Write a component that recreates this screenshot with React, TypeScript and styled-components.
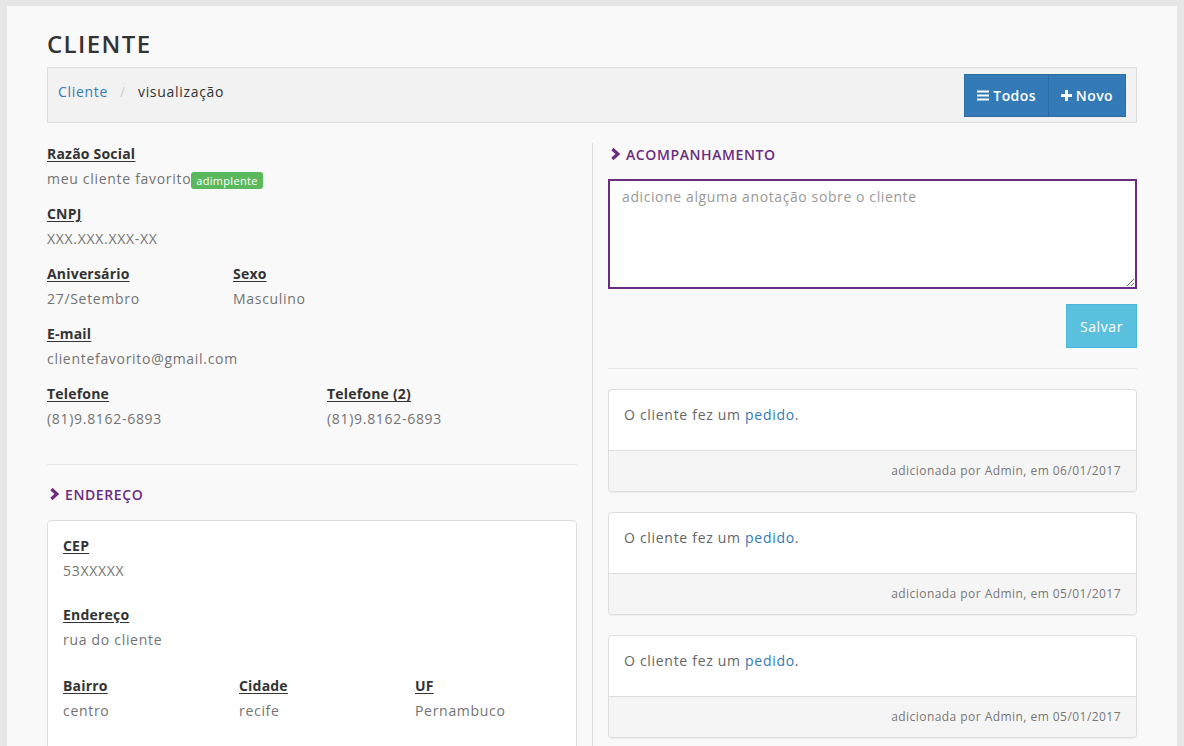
import React from "react";
import styled, { createGlobalStyle } from "styled-components";

const FONT = `"Open Sans", "Liberation Sans", sans-serif`;
const PURPLE = "#6b2c80";

const GlobalStyle = createGlobalStyle`
  html, body {
    margin: 0;
    padding: 0;
    background: #e6e6e6;
  }
  body {
    font-family: ${FONT};
    font-size: 14px;
    color: #333;
    overflow: hidden;
  }
  * {
    box-sizing: border-box;
  }
`;

const Page = styled.div`
  padding: 6px 7px 0 7px;
  height: 746px;
`;

const Panel = styled.div`
  background: #f9f9f9;
  width: 1170px;
  height: 740px;
  padding: 20px 40px 0 40px;
  overflow: hidden;
`;

const Title = styled.h1`
  margin: 0 0 5px 0;
  font-size: 24px;
  line-height: 36px;
  font-weight: 600;
  color: #333;
  letter-spacing: 1.4px;
`;

const Breadcrumb = styled.div`
  display: flex;
  align-items: flex-start;
  justify-content: space-between;
  height: 56px;
  background: #f2f2f2;
  border: 1px solid #ddd;
  padding: 0 10px;
`;

const Crumbs = styled.div`
  display: flex;
  align-items: center;
  gap: 12px;
  padding-top: 14px;
  line-height: 20px;
  font-size: 14px;
  font-weight: 500;
  letter-spacing: 0.7px;
`;

const CrumbLink = styled.a`
  color: #337ab7;
  text-decoration: none;
`;

const CrumbSep = styled.span`
  color: #ccc;
`;

const CrumbCurrent = styled.span`
  color: #333;
  font-weight: 500;
`;

const BtnGroup = styled.div`
  display: flex;
  margin-top: 6px;
`;

const TopButton = styled.button<{ $px: number }>`
  display: flex;
  align-items: center;
  gap: 4px;
  height: 43px;
  padding: 0 ${(p) => p.$px}px;
  background: #337ab7;
  border: 1px solid #2e6da4;
  color: #fff;
  font-family: ${FONT};
  font-size: 14px;
  font-weight: 600;
  letter-spacing: 0.4px;
  & + & {
    margin-left: -1px;
  }
`;

const Columns = styled.div`
  display: flex;
  margin-top: 21px;
`;

const LeftCol = styled.div`
  width: 530px;
  flex: none;
`;

const Divider = styled.div`
  width: 1px;
  background: #ddd;
  margin: -1px 15px 0 15px;
  flex: none;
  height: 620px;
`;

const RightCol = styled.div`
  width: 529px;
  flex: none;
`;

const FieldRow = styled.div<{ $cols: number; $col: number }>`
  display: grid;
  grid-template-columns: repeat(${(p) => p.$cols}, ${(p) => p.$col}px);
`;

const Field = styled.div<{ $mb?: number }>`
  margin-bottom: ${(p) => p.$mb ?? 15}px;
  white-space: nowrap;
`;

const Label = styled.div`
  font-weight: 700;
  text-decoration: underline;
  text-underline-offset: 2px;
  line-height: 20px;
  color: #333;
  letter-spacing: 0.2px;
`;

const Value = styled.div`
  margin-top: 5px;
  line-height: 20px;
  color: #737373;
  font-weight: 500;
  letter-spacing: 0.7px;
  display: flex;
  align-items: center;
`;

const Badge = styled.span`
  display: inline-block;
  background: #5cb85c;
  color: #fff;
  font-size: 11px;
  line-height: 17px;
  padding: 0 5px;
  border-radius: 3px;
  margin-top: 2px;
  letter-spacing: 0.3px;
`;

const Rule = styled.hr<{ $mt: number; $mb: number }>`
  border: 0;
  border-top: 1px solid #e6e6e6;
  margin: ${(p) => p.$mt}px 0 ${(p) => p.$mb}px 0;
`;

const SectionTitle = styled.div`
  display: flex;
  align-items: center;
  gap: 6px;
  height: 20px;
  color: ${PURPLE};
  font-weight: 600;
  font-size: 14px;
  letter-spacing: 0.6px;
  padding-left: 3px;
`;

const Box = styled.div`
  margin-top: 16px;
  background: #fff;
  border: 1px solid #ddd;
  border-radius: 4px;
  padding: 15px;
  height: 260px;
`;

const Note = styled.textarea`
  display: block;
  width: 100%;
  height: 110px;
  margin-top: 15px;
  border: 2px solid ${PURPLE};
  padding: 6px 12px;
  font-family: ${FONT};
  font-size: 14px;
  line-height: 20px;
  letter-spacing: 0.6px;
  background: #fff;
  color: #555;
  outline: none;
  resize: vertical;
  &::placeholder {
    color: #999;
  }
`;

const SaveRow = styled.div`
  display: flex;
  justify-content: flex-end;
  margin-top: 15px;
`;

const SaveButton = styled.button`
  height: 44px;
  padding: 0 13px;
  background: #5bc0de;
  border: 1px solid #46b8da;
  color: #fff;
  font-family: ${FONT};
  font-size: 14px;
  font-weight: 500;
  letter-spacing: 0.6px;
`;

const NoteCard = styled.div`
  background: #fff;
  border: 1px solid #ddd;
  border-radius: 4px;
  box-shadow: 0 1px 1px rgba(0, 0, 0, 0.05);
  margin-bottom: 20px;
`;

const NoteBody = styled.div`
  padding: 15px;
`;

const NoteText = styled.p`
  margin: 0 0 10px 0;
  line-height: 20px;
  color: #666;
  font-weight: 500;
  letter-spacing: 0.7px;
  a {
    color: #337ab7;
    text-decoration: none;
  }
`;

const NoteFooter = styled.div`
  background: #f5f5f5;
  border-top: 1px solid #ddd;
  padding: 10px 15px;
  text-align: right;
  font-size: 12px;
  line-height: 20px;
  color: #777;
  letter-spacing: 0.45px;
  border-radius: 0 0 3px 3px;
`;

const Chevron = () => (
  <svg width="9" height="12" viewBox="0 0 9 12">
    <path d="M1.4 1 L6.8 6 L1.4 11" fill="none" stroke={PURPLE} strokeWidth="3.2" strokeLinejoin="miter" />
  </svg>
);

const BarsIcon = () => (
  <svg width="12" height="11" viewBox="0 0 12 11">
    <rect x="0" y="0.5" width="12" height="2" fill="#fff" />
    <rect x="0" y="4.5" width="12" height="2" fill="#fff" />
    <rect x="0" y="8.5" width="12" height="2" fill="#fff" />
  </svg>
);

const PlusIcon = () => (
  <svg width="11" height="11" viewBox="0 0 11 11">
    <rect x="4" y="0" width="3" height="11" fill="#fff" />
    <rect x="0" y="4" width="11" height="3" fill="#fff" />
  </svg>
);

const notes = ["06/01/2017", "05/01/2017", "05/01/2017"];

export default function App() {
  return (
    <>
      <GlobalStyle />
      <Page>
        <Panel>
          <Title>CLIENTE</Title>
          <Breadcrumb>
            <Crumbs>
              <CrumbLink href="#">Cliente</CrumbLink>
              <CrumbSep>/</CrumbSep>
              <CrumbCurrent>visualização</CrumbCurrent>
            </Crumbs>
            <BtnGroup>
              <TopButton $px={12}>
                <BarsIcon /> Todos
              </TopButton>
              <TopButton $px={12}>
                <PlusIcon /> Novo
              </TopButton>
            </BtnGroup>
          </Breadcrumb>

          <Columns>
            <LeftCol>
              <Field>
                <Label>Razão Social</Label>
                <Value>
                  meu cliente favorito<Badge>adimplente</Badge>
                </Value>
              </Field>
              <Field>
                <Label>CNPJ</Label>
                <Value>XXX.XXX.XXX-XX</Value>
              </Field>
              <FieldRow $cols={2} $col={186}>
                <Field>
                  <Label>Aniversário</Label>
                  <Value>27/Setembro</Value>
                </Field>
                <Field>
                  <Label>Sexo</Label>
                  <Value>Masculino</Value>
                </Field>
              </FieldRow>
              <Field>
                <Label>E-mail</Label>
                <Value>clientefavorito@gmail.com</Value>
              </Field>
              <FieldRow $cols={2} $col={280}>
                <Field>
                  <Label>Telefone</Label>
                  <Value>(81)9.8162-6893</Value>
                </Field>
                <Field>
                  <Label>Telefone (2)</Label>
                  <Value>(81)9.8162-6893</Value>
                </Field>
              </FieldRow>

              <Rule $mt={20} $mb={19} />

              <SectionTitle>
                <Chevron /> ENDEREÇO
              </SectionTitle>
              <Box>
                <Field $mb={24}>
                  <Label>CEP</Label>
                  <Value>53XXXXX</Value>
                </Field>
                <Field $mb={26}>
                  <Label>Endereço</Label>
                  <Value>rua do cliente</Value>
                </Field>
                <FieldRow $cols={3} $col={176}>
                  <Field>
                    <Label>Bairro</Label>
                    <Value>centro</Value>
                  </Field>
                  <Field>
                    <Label>Cidade</Label>
                    <Value>recife</Value>
                  </Field>
                  <Field>
                    <Label>UF</Label>
                    <Value>Pernambuco</Value>
                  </Field>
                </FieldRow>
              </Box>
            </LeftCol>

            <Divider />

            <RightCol>
              <SectionTitle>
                <Chevron /> ACOMPANHAMENTO
              </SectionTitle>
              <Note placeholder="adicione alguma anotação sobre o cliente" />
              <SaveRow>
                <SaveButton>Salvar</SaveButton>
              </SaveRow>
              <Rule $mt={20} $mb={20} />
              {notes.map((date, i) => (
                <NoteCard key={i}>
                  <NoteBody>
                    <NoteText>
                      O cliente fez um <a href="#">pedido</a>.
                    </NoteText>
                  </NoteBody>
                  <NoteFooter>adicionada por Admin, em {date}</NoteFooter>
                </NoteCard>
              ))}
            </RightCol>
          </Columns>
        </Panel>
      </Page>
    </>
  );
}
